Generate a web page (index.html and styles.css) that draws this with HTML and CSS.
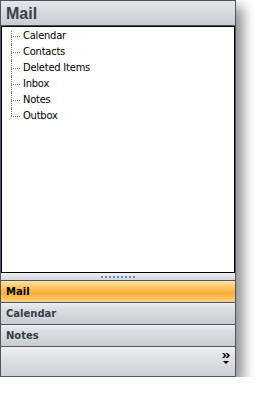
FILE: index.html
```html
<!DOCTYPE html>
<html>
<head>
<meta charset="utf-8">
<link rel="stylesheet" href="styles.css">
</head>
<body>
<div class="panel">
  <div class="header">Mail</div>
  <div class="content">
    <ul class="tree">
      <li>Calendar</li>
      <li>Contacts</li>
      <li>Deleted Items</li>
      <li>Inbox</li>
      <li>Notes</li>
      <li>Outbox</li>
    </ul>
  </div>
  <div class="splitter"><span class="grip"></span></div>
  <div class="btn active">Mail</div>
  <div class="btn">Calendar</div>
  <div class="btn">Notes</div>
  <div class="footer">
    <svg class="more" width="8" height="12" viewBox="0 0 8 12">
      <path d="M0 0h2l2.5 2.5L2 5H0l2.5-2.5z" fill="#000"/>
      <path d="M3.5 0h2L8 2.5 5.5 5h-2L6 2.5z" fill="#000"/>
      <path d="M1 8h6l-3 3z" fill="#000"/>
    </svg>
  </div>
</div>
</body>
</html>
```
FILE: styles.css
```css
html, body {
  margin: 0;
  padding: 0;
  background: #fff;
}
.panel {
  width: 234px;
  border: 1px solid #4d5560;
  background: #4d5560;
  display: flex;
  flex-direction: column;
  box-shadow: 7px 7px 12px rgba(0, 0, 0, 0.45);
}
.header {
  height: 24px;
  line-height: 25px;
  padding-left: 5px;
  background: linear-gradient(#e4e6e9, #c9ccd1);
  font-family: "Liberation Sans", Arial, sans-serif;
  font-weight: bold;
  font-size: 16px;
  color: #3a4149;
  border-bottom: 1px solid #4d5560;
}
.content {
  height: 245px;
  background: #fff;
  border: 1px solid #000;
}
.tree {
  list-style: none;
  margin: 0;
  padding: 1px 0 0 9px;
  font-family: "DejaVu Sans Condensed", "DejaVu Sans", sans-serif;
  font-size: 11px;
  letter-spacing: -0.2px;
  color: #000;
}
.tree li {
  height: 16px;
  line-height: 16px;
  padding-left: 12px;
  position: relative;
}
.tree li::before {
  content: "";
  position: absolute;
  left: 0;
  top: 8px;
  width: 9px;
  border-top: 1px dotted #808080;
}
.tree li::after {
  content: "";
  position: absolute;
  left: 0;
  top: 0;
  height: 16px;
  border-left: 1px dotted #808080;
}
.tree li:first-child::after {
  top: 3px;
  height: 13px;
}
.tree li:last-child::after {
  height: 8px;
}
.splitter {
  height: 7px;
  background: linear-gradient(#eef0f2, #d3d6da);
  border-bottom: 1px solid #4d5560;
  display: flex;
  justify-content: center;
  align-items: center;
}
.grip {
  width: 34px;
  height: 2px;
  background: repeating-linear-gradient(90deg, #5b86d6 0 2px, transparent 2px 4px);
}
.btn {
  height: 21px;
  line-height: 21px;
  padding-left: 5px;
  font-family: "DejaVu Sans", sans-serif;
  font-weight: bold;
  font-size: 10px;
  color: #363d45;
  background: linear-gradient(#eceef1 0%, #dadde1 30%, #c9ccd1 100%);
  border-bottom: 1px solid #4d5560;
}
.btn.active {
  color: #000;
  background: linear-gradient(#ffe2a6 0%, #ffc25a 35%, #fbad3a 60%, #ffd27a 100%);
}
.footer {
  box-sizing: border-box;
  height: 29px;
  background: linear-gradient(#eef0f2 0%, #dfe2e5 40%, #cdd0d4 100%);
  display: flex;
  justify-content: flex-end;
  align-items: flex-start;
  padding: 6px 5px 0 0;
}
.more {
  display: block;
}
```
